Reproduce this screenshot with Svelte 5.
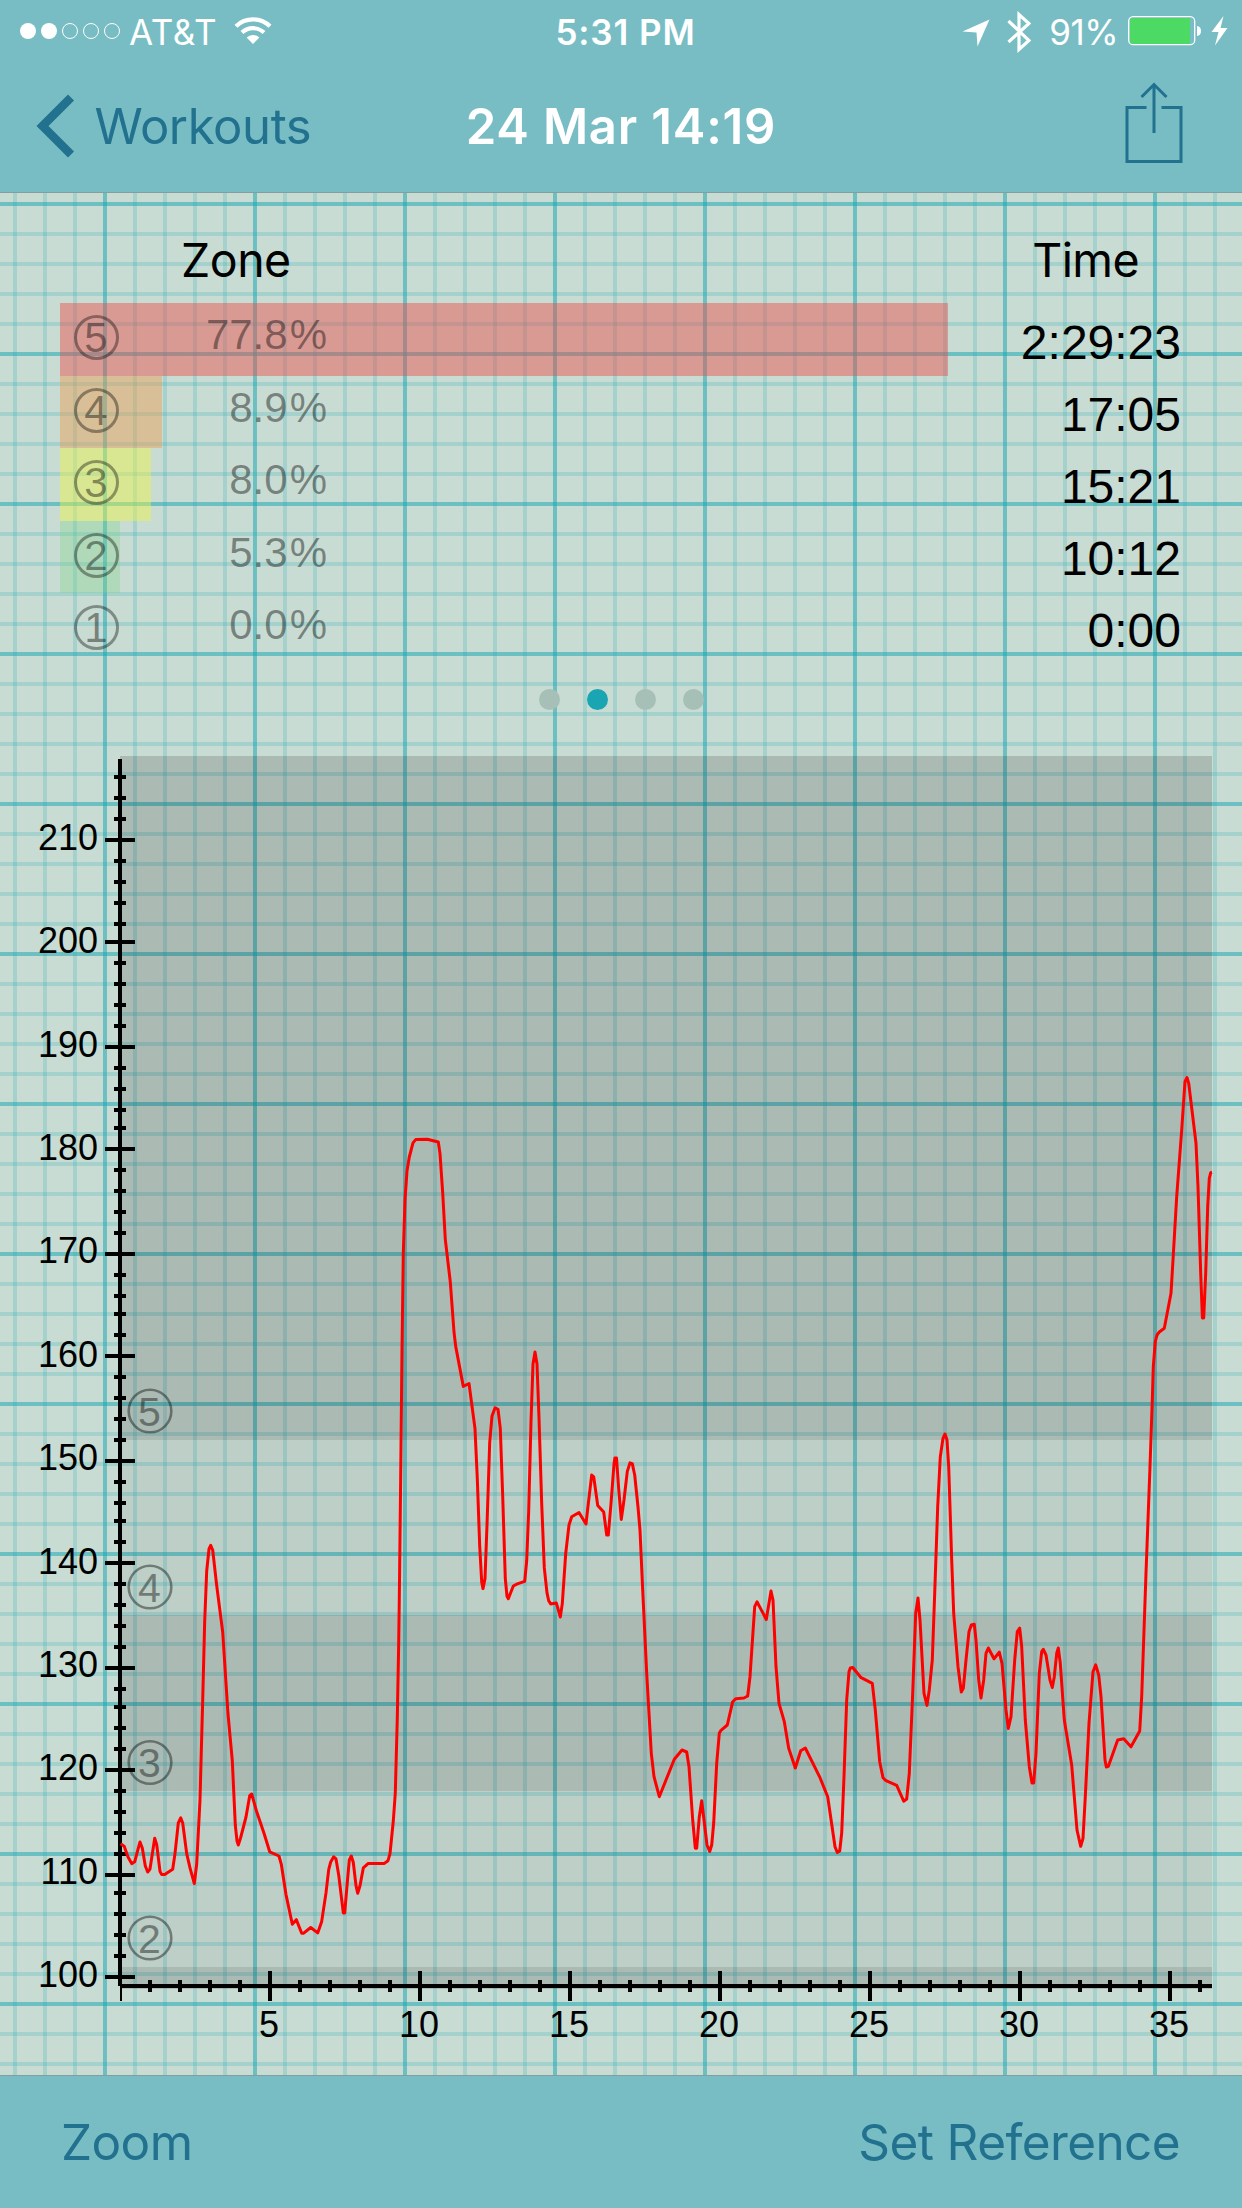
<script lang="ts">
    const zones = [
        { zone: 5, pct: 77.8, time: "2:29:23", color: "rgba(236, 76, 72, 0.46)" },
        { zone: 4, pct: 8.9, time: "17:05", color: "rgba(234, 156, 80, 0.46)" },
        { zone: 3, pct: 8.0, time: "15:21", color: "rgba(236, 242, 70, 0.46)" },
        { zone: 2, pct: 5.3, time: "10:12", color: "rgba(120, 212, 130, 0.3)" },
        { zone: 1, pct: 0.0, time: "0:00", color: "transparent" },
    ];
    const BAR_SCALE = 11.413;

    const pages = [0, 1, 2, 3];
    const activePage = 1;

    // chart geometry, in page pixels
    const TOP = 744;
    const BOTTOM = 2075;
    const X0 = 120;
    const X1 = 1212;

    const bands = [
        { y: 756, h: 684, dark: true },
        { y: 1440, h: 175, dark: false },
        { y: 1615, h: 176, dark: true },
        { y: 1791, h: 176, dark: false },
        { y: 1967, h: 22, dark: true },
    ];

    const zoneMarks = [
        { zone: 5, y: 1411 },
        { zone: 4, y: 1587 },
        { zone: 3, y: 1762.5 },
        { zone: 2, y: 1938 },
    ];

    function bpmY(bpm: number): number {
        return 1977 - (bpm - 100) * 10.336;
    }

    // ticks sit on whole points (3px)
    function snap(v: number): number {
        return Math.round(v / 3) * 3;
    }

    const yTicks: number[] = [];
    for (let v = 100; v <= 216; v += 2) yTicks.push(v);

    const xTicks: number[] = [];
    for (let m = 1; m <= 36; m++) xTicks.push(m);

    const trace = `
        120.7,1843.6 124.3,1846.4 128,1857 131.7,1863.6 134.7,1861.8 137.3,1851.8 140,1842 142.3,1848
        145.3,1866 147.7,1872 150,1869 154.7,1838.2 156.7,1844.6 160,1871.4 161.7,1874.6 164.7,1874.6
        172.7,1869.3 175,1853.6 178.3,1823 180.7,1817.9 182.7,1823 186.7,1853.6 190,1867.9 194.3,1883.5
        196.7,1864 200,1800 202.7,1700 204.7,1621 206.7,1571 209,1549 210.7,1545.4 212.7,1550
        216.7,1585.7 222.7,1632 228,1714 232.3,1760.7 235.3,1825 237,1841 238.3,1845 240.7,1837.5
        246,1817 249.7,1795.7 251.7,1794 256.7,1811.8 264,1833.2 269.7,1851.8 279,1856 281.3,1864.3
        286,1894.6 292.3,1924.3 296.3,1919.6 301.7,1933.2 303.7,1933.2 310.7,1927.5 317.7,1932.9
        321.7,1921.4 326,1892.9 328.7,1869.6 330.7,1862 333.7,1856.8 336,1858.9 338.7,1875
        343.3,1912.9 344.7,1912.9 346.7,1889.3 349.3,1860 351.3,1856 353.3,1862.5 356,1885.7
        357.7,1893.2 360,1885.7 363.3,1867.9 368,1863.6 384,1863.6 388,1860.7 390,1853.6 393.3,1821
        395.3,1793 397.3,1718 398.7,1643 399.3,1600 400.7,1475 402,1350 403.3,1253.6 405,1200
        407,1171 409.3,1157 413,1142.9 415.7,1139.6 427.3,1139.3 438.3,1142 440,1153.6 442.7,1192.9
        445.3,1239.3 450.3,1282 454,1332 455.7,1346.4 463.3,1386.4 469,1383.5 475,1428.6 477.3,1478.6
        479.7,1546 481.7,1582 483,1588.6 485,1578.6 487,1525 489.7,1442.9 492,1416 495,1407.9
        498,1409.3 500.3,1428.6 502.7,1496 505.3,1578.6 507,1596.4 508.3,1598.8 513.3,1586
        517.3,1583.9 524.7,1581.4 526.7,1560.7 528.7,1510.7 531,1421.4 533,1364 535,1352 537,1364
        539,1418 541.7,1503.6 544.3,1567.9 547,1592.9 548.7,1600.7 550.7,1603.9 556.3,1602.9
        560.3,1617 562.3,1603.6 565.7,1553.6 569,1525 571.7,1516.8 579,1512.5 586,1524 588.3,1503.6
        591.7,1475 593.7,1476.8 597.7,1505.4 603.7,1512 606.7,1535 608.3,1535 611,1503.6 614,1464
        614.9,1458 616.5,1458 618.7,1489 621.3,1519.4 624,1500 627.3,1471.4 630,1462.9 632.3,1463.6
        634.7,1475 638,1507 640,1530 642.7,1590 646.7,1673.3 651.3,1753.3 654,1776.7 659.3,1796.7
        674.3,1759.3 682,1750 686.7,1752 689,1766.7 692.7,1820 695.3,1848.2 696.7,1848.2 699.3,1816.7
        701.7,1800.8 704,1820 707,1845 709.7,1851.5 711.7,1845 713.7,1823 716.7,1763.3 719.3,1733.3
        721,1730.3 727.3,1725 732.7,1701.7 735.7,1698.7 744,1698 747.7,1696 750,1676.7 754.7,1606.7
        757,1601.8 766.3,1619.5 771,1591 773,1600 776,1666.7 779,1703.3 784.3,1721.7 788.7,1748.3
        795.3,1768 800.7,1750.7 805.3,1748 820,1777.7 827.7,1796.7 835,1846.7 837.3,1852.5
        839.7,1851 841.7,1833 844,1776.7 846.7,1700 849,1671.7 850.3,1667.9 852.7,1667.5
        860.7,1677.3 872.3,1683.3 875.3,1710 879.7,1761.7 883,1777.7 886,1780.7 896.7,1785.3
        903.7,1801.2 906.7,1799 909.3,1773.3 912.7,1693.3 915.7,1613.3 918,1598 920,1620 924,1693.3
        927,1705.4 929.3,1690 932.3,1660 934.7,1593.3 937.7,1506.7 940.3,1456.7 943,1438.3
        945,1434 947,1440 948.7,1466.7 951.7,1560 953.7,1613.3 958,1666.7 961.3,1692 963.3,1688.3
        966,1660 969,1631.7 971.3,1625 974.3,1624.3 976,1640 978.7,1680 981,1698 983.7,1680
        986,1653.3 988.3,1648 994,1658.8 999.3,1652.2 1002,1663.3 1006,1710 1008.3,1728.5
        1011,1716.7 1014.7,1660 1017.3,1631.7 1019.7,1628.2 1021.7,1646.7 1025.3,1720 1029.3,1766.7
        1032,1783 1033.7,1783 1036,1753.3 1039.3,1673.3 1041.7,1651.7 1043.3,1649.3 1046,1655
        1050,1680 1052.3,1687.5 1054.3,1676.7 1056.7,1653.3 1058.3,1648 1060.3,1663.3 1064.3,1720
        1071.7,1765 1077,1830 1080.7,1846.3 1083,1838.3 1085.3,1796.7 1089,1723.3 1093,1671.7
        1095.7,1664.8 1098.7,1675 1101,1696.7 1105,1760 1106.3,1767 1108.3,1766.4 1117.7,1740
        1123.7,1738.7 1131,1746.8 1139.7,1731 1141.7,1696.7 1146,1573.3 1150,1466.7 1152.3,1400
        1153.3,1366.7 1155.3,1341.7 1157,1335 1159,1332.3 1164.3,1328.3 1171,1293.3 1173,1260
        1176.7,1196.7 1181.7,1130 1185,1081.7 1187,1077.5 1188.7,1083.3 1196,1143.3 1198,1186.7
        1200.7,1273.3 1202.4,1318 1203.7,1318 1205.7,1273.3 1207.7,1206.7 1209.3,1178.3
        1210.7,1172.7 1212,1172.3`;
</script>

<div class="screen">
    <header>
        <div class="status">
            <div class="status-side">
                <svg class="signal" width="102" height="18" viewBox="0 0 102 18">
                    {#each [0, 1, 2, 3, 4] as i}
                        <circle
                            cx={9 + i * 21}
                            cy="9"
                            r={i < 2 ? 8 : 7.5}
                            fill={i < 2 ? "#fff" : "none"}
                            stroke={i < 2 ? "none" : "#fff"}
                        />
                    {/each}
                </svg>
                <span class="carrier">AT&amp;T</span>
                <svg class="wifi" width="38" height="28" viewBox="0 0 38 28">
                    <path d="M2 9.2A24.5 24.5 0 0 1 36 9.2" fill="none" stroke="#fff" stroke-width="4.2" />
                    <path d="M8 15.6A16 16 0 0 1 30 15.6" fill="none" stroke="#fff" stroke-width="4.2" />
                    <path d="M19 27L12.6 20.6A9.2 9.2 0 0 1 25.4 20.6Z" fill="#fff" />
                </svg>
            </div>
            <span class="clock">5:31 PM</span>
            <div class="status-side right">
                <svg class="location" width="28" height="28" viewBox="0 0 28 28">
                    <path d="M27.5 .5L15.5 27.5L14.5 13.5L.5 12.5Z" fill="#fff" />
                </svg>
                <svg class="bluetooth" width="24" height="42" viewBox="0 0 24 42">
                    <path
                        d="M1.5 10L22 29.5L12 38.5V3.5L22 12.5L1.5 31"
                        fill="none"
                        stroke="#fff"
                        stroke-width="3.2"
                    />
                </svg>
                <span class="percent">91%</span>
                <svg class="battery" width="74" height="30" viewBox="0 0 74 30">
                    <rect x=".7" y=".7" width="66" height="28" rx="4.5" fill="none" stroke="#fff" stroke-width="1.3" />
                    <path d="M5 2H62V28H5Q2 28 2 25V5Q2 2 5 2Z" fill="#4cd964" />
                    <path d="M69 10Q73 10.500 73 15T69 20Z" fill="#fff" />
                </svg>
                <svg class="bolt" width="17" height="30" viewBox="0 0 17 30">
                    <path d="M12.500 0L.5 16H7.500L4 29.500L16.500 12H9.500Z" fill="#fff" />
                </svg>
            </div>
        </div>
        <nav>
            <div class="back">
                <svg width="40" height="64" viewBox="0 0 40 64">
                    <path d="M35 3.500L6.500 32L35 60.500" fill="none" stroke="#21718f" stroke-width="8.500" />
                </svg>
                <span>Workouts</span>
            </div>
            <h1>24 Mar 14:19</h1>
            <svg class="share" width="58" height="82" viewBox="0 0 58 82">
                <path
                    d="M21.500 25.500H2V79.500H56V25.500H36.500M29 51V3M16.500 15L29 2.500L41.500 15"
                    fill="none"
                    stroke="#21718f"
                    stroke-width="3"
                />
            </svg>
        </nav>
    </header>

    <main>
        <section class="summary">
            <div class="zones">
                <h2>Zone</h2>
                {#each zones as z}
                    <div class="zone-row">
                        <div class="zone-bar" style="width: {z.pct * BAR_SCALE}px; background: {z.color}"></div>
                        <span class="zone-badge">{z.zone}</span>
                        <span class="zone-pct">{z.pct.toFixed(1)}<i>%</i></span>
                    </div>
                {/each}
            </div>
            <div class="times">
                <h2>Time</h2>
                {#each zones as z}
                    <div class="time">{z.time}</div>
                {/each}
            </div>
        </section>

        <div class="pager">
            {#each pages as p}
                <span class="page" class:active={p === activePage}></span>
            {/each}
        </div>

        <svg class="chart" width="1242" height={BOTTOM - TOP} viewBox="0 {TOP} 1242 {BOTTOM - TOP}">
            {#each bands as b}
                <rect x={X0} y={b.y} width={X1 - X0} height={b.h} fill="#000" fill-opacity={b.dark ? 0.15 : 0.055} />
            {/each}

            {#each zoneMarks as m}
                <g class="mark">
                    <circle cx="150" cy={m.y} r="21.3" />
                    <text x="149.500" y={m.y + 14.5}>{m.zone}</text>
                </g>
            {/each}

            <rect x="118" y="759" width="4" height="1227" />
            {#each yTicks as v}
                {#if v % 10 === 0}
                    <rect x="105" y={snap(bpmY(v)) - 2} width="30" height="4" />
                    <text class="label end" x="98" y={Math.round(bpmY(v) + 10)}>{v}</text>
                {:else}
                    <rect x="114" y={snap(bpmY(v)) - 2} width="12" height="4" />
                {/if}
            {/each}

            <rect x="120" y="1984" width={X1 - X0} height="4" />
            <rect x="120" y="1986" width="2" height="15" />
            {#each xTicks as m}
                {#if m % 5 === 0}
                    <rect x={X0 + m * 30 - 2} y="1971" width="4" height="30" />
                    <text class="label" x={X0 + m * 30 - 1} y="2037">{m}</text>
                {:else}
                    <rect x={X0 + m * 30 - 2} y="1980" width="4" height="12" />
                {/if}
            {/each}

            <polyline points={trace} fill="none" stroke="#f00" stroke-width="3" stroke-linejoin="round" />
        </svg>
    </main>

    <footer>
        <span class="zoom">Zoom</span>
        <span class="reference">Set Reference</span>
    </footer>
</div>

<style>
    :global(body) {
        margin: 0;
    }

    .screen {
        width: 1242px;
        height: 2208px;
        display: flex;
        flex-direction: column;
        overflow: hidden;
        font-family: Inter, "Liberation Sans", sans-serif;
    }

    header {
        box-sizing: border-box;
        height: 193px;
        background: #78bdc4;
        border-bottom: 1px solid #829e9f;
    }

    .status {
        height: 60px;
        display: grid;
        grid-template-columns: 1fr auto 1fr;
        align-items: center;
        color: #fff;
        font-size: 35px;
        line-height: 60px;
    }

    .status-side {
        display: flex;
        align-items: center;
        height: 60px;
        padding-left: 19px;
    }

    .status-side.right {
        justify-content: flex-end;
        padding: 0 14px 0 0;
    }

    .carrier {
        margin: 2px 0 0 8px;
        width: 88px;
        letter-spacing: 0.6px;
    }

    .wifi {
        margin-left: 17px;
    }

    .clock {
        margin-top: 2px;
        padding-left: 9px;
        font-weight: 600;
        letter-spacing: 0.9px;
    }

    .location {
        margin: 3px 17px 0 0;
    }

    .bluetooth {
        margin: 1px 18px 0 0;
    }

    .percent {
        margin: 2px 10px 0 0;
        letter-spacing: -0.5px;
    }

    .battery {
        margin-right: 9px;
    }

    nav {
        height: 132px;
        display: grid;
        grid-template-columns: 1fr auto 1fr;
        grid-template-rows: 132px;
        align-items: center;
        color: #21718f;
        font-size: 49px;
        line-height: 130px;
    }

    .back {
        display: flex;
        align-items: center;
        padding-left: 36px;
    }

    .back span {
        margin: 2px 0 0 18.5px;
        letter-spacing: -0.4px;
    }

    h1 {
        margin: 2px 0 0;
        color: #fff;
        font-size: 49px;
        font-weight: 600;
        letter-spacing: 0.8px;
    }

    .share {
        justify-self: end;
        margin: -6px 59px 0 0;
    }

    main {
        flex: 1;
        display: flex;
        flex-direction: column;
        border-bottom: 1px solid #829e9f;
        background-color: #c9dcd3;
        background-image:
            linear-gradient(90deg, rgba(22, 166, 178, 0.4) 4px, transparent 4px),
            linear-gradient(rgba(22, 166, 178, 0.4) 4px, transparent 4px),
            linear-gradient(90deg, rgba(22, 166, 178, 0.2) 4px, transparent 4px),
            linear-gradient(rgba(22, 166, 178, 0.2) 4px, transparent 4px);
        background-size:
            150px 150px,
            150px 150px,
            30px 30px,
            30px 30px;
        background-position:
            103px 0,
            0 9px,
            13px 0,
            0 9px;
    }

    .summary {
        height: 485px;
        display: flex;
        justify-content: space-between;
    }

    h2 {
        margin: 0;
        font-size: 46.5px;
        font-weight: 400;
        line-height: 60px;
    }

    .zones {
        padding: 37px 0 0 60px;
        width: 900px;
    }

    .zones h2 {
        margin-left: 121px;
        height: 73px;
        letter-spacing: -0.5px;
    }

    .zone-row {
        position: relative;
        z-index: 0;
        height: 72.6px;
        display: flex;
        font-family: "Liberation Sans", Arial, sans-serif;
        color: rgba(0, 0, 0, 0.42);
    }

    .zone-bar {
        position: absolute;
        z-index: -1;
        left: 0;
        top: 0;
        height: 100%;
    }

    .zone-badge {
        box-sizing: border-box;
        width: 45px;
        height: 45px;
        margin: 12px 0 0 13.5px;
        border: 3px solid rgba(0, 0, 0, 0.37);
        border-radius: 50%;
        font-size: 42px;
        line-height: 40px;
        text-align: center;
    }

    .zone-pct {
        width: 208.5px;
        font-size: 42px;
        line-height: 64px;
        text-align: right;
    }

    .zone-pct i {
        font-style: normal;
        margin-left: 2px;
    }

    .times {
        padding: 37px 61px 0 0;
        text-align: right;
    }

    .times h2 {
        margin-right: 42px;
        height: 75px;
        letter-spacing: -0.6px;
    }

    .time {
        height: 72px;
        font-family: "Liberation Sans", Arial, sans-serif;
        font-size: 48px;
        line-height: 76px;
    }

    .pager {
        height: 66px;
        display: flex;
        justify-content: center;
        gap: 27px;
        padding-top: 11px;
        box-sizing: border-box;
    }

    .page {
        width: 21px;
        height: 21px;
        border-radius: 50%;
        background: #a6bfb7;
    }

    .page.active {
        background: #1aa5b2;
    }

    .chart {
        display: block;
        font-family: "Liberation Sans", Arial, sans-serif;
    }

    .label {
        font-size: 36px;
        text-anchor: middle;
    }

    .label.end {
        text-anchor: end;
    }

    .mark {
        opacity: 0.4;
        text-anchor: middle;
        font-size: 41px;
    }

    .mark circle {
        fill: none;
        stroke: #000;
        stroke-width: 2.6;
    }

    footer {
        height: 132px;
        box-sizing: border-box;
        padding: 0 62px 0 61px;
        display: flex;
        justify-content: space-between;
        background: #78bdc4;
        color: #21718f;
        font-size: 49.5px;
        line-height: 133px;
        letter-spacing: -0.6px;
    }
</style>
